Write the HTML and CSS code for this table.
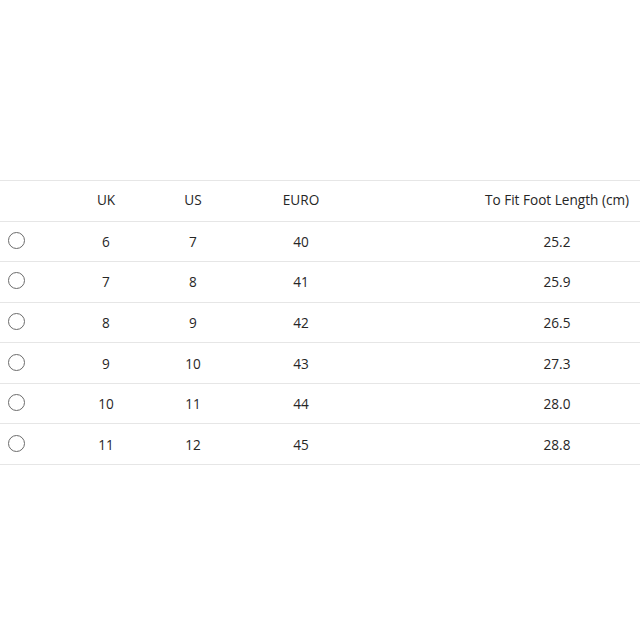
FILE: index.html
```html
<!DOCTYPE html>
<html>
<head>
<meta charset="utf-8">
<link rel="stylesheet" href="styles.css">
</head>
<body>
<div class="page">
  <div class="table">
    <div class="row head">
      <div class="cell sel"></div>
      <div class="cell">UK</div>
      <div class="cell">US</div>
      <div class="cell">EURO</div>
      <div class="cell spacer"></div>
      <div class="cell">To Fit Foot Length (cm)</div>
    </div>
    <div class="row"><div class="cell sel"><span class="radio"></span></div><div class="cell">6</div><div class="cell">7</div><div class="cell">40</div><div class="cell spacer"></div><div class="cell">25.2</div></div>
    <div class="row"><div class="cell sel"><span class="radio"></span></div><div class="cell">7</div><div class="cell">8</div><div class="cell">41</div><div class="cell spacer"></div><div class="cell">25.9</div></div>
    <div class="row"><div class="cell sel"><span class="radio"></span></div><div class="cell">8</div><div class="cell">9</div><div class="cell">42</div><div class="cell spacer"></div><div class="cell">26.5</div></div>
    <div class="row"><div class="cell sel"><span class="radio"></span></div><div class="cell">9</div><div class="cell">10</div><div class="cell">43</div><div class="cell spacer"></div><div class="cell">27.3</div></div>
    <div class="row"><div class="cell sel"><span class="radio"></span></div><div class="cell">10</div><div class="cell">11</div><div class="cell">44</div><div class="cell spacer"></div><div class="cell">28.0</div></div>
    <div class="row last"><div class="cell sel"><span class="radio"></span></div><div class="cell">11</div><div class="cell">12</div><div class="cell">45</div><div class="cell spacer"></div><div class="cell">28.8</div></div>
  </div>
</div>
</body>
</html>
```
FILE: styles.css
```css
html, body {
  margin: 0;
  padding: 0;
  background: #ffffff;
  width: 640px;
  height: 640px;
  overflow: hidden;
}
.page {
  padding-top: 180px;
  font-family: "Open Sans", "Noto Sans", sans-serif;
  font-size: 13.6px;
  color: #262626;
}
.table {
  width: 640px;
}
.row {
  display: grid;
  grid-template-columns: 62px 88px 86px 130px 108px 166px;
  height: 40.57px;
  box-sizing: border-box;
  border-top: 1px solid #e6e6e6;
  align-items: center;
}
.row.head .cell {
  margin-top: -2px;
}
.row.last {
  border-bottom: 1px solid #e6e6e6;
  height: 41.57px;
}
.cell {
  text-align: center;
  white-space: nowrap;
}
.cell.sel {
  text-align: left;
  padding-left: 8px;
  display: flex;
  align-items: center;
}
.radio {
  display: block;
  width: 17px;
  height: 17px;
  box-sizing: border-box;
  border: 1.5px solid #6b6b6b;
  border-radius: 50%;
  margin-top: -2px;
}
```
